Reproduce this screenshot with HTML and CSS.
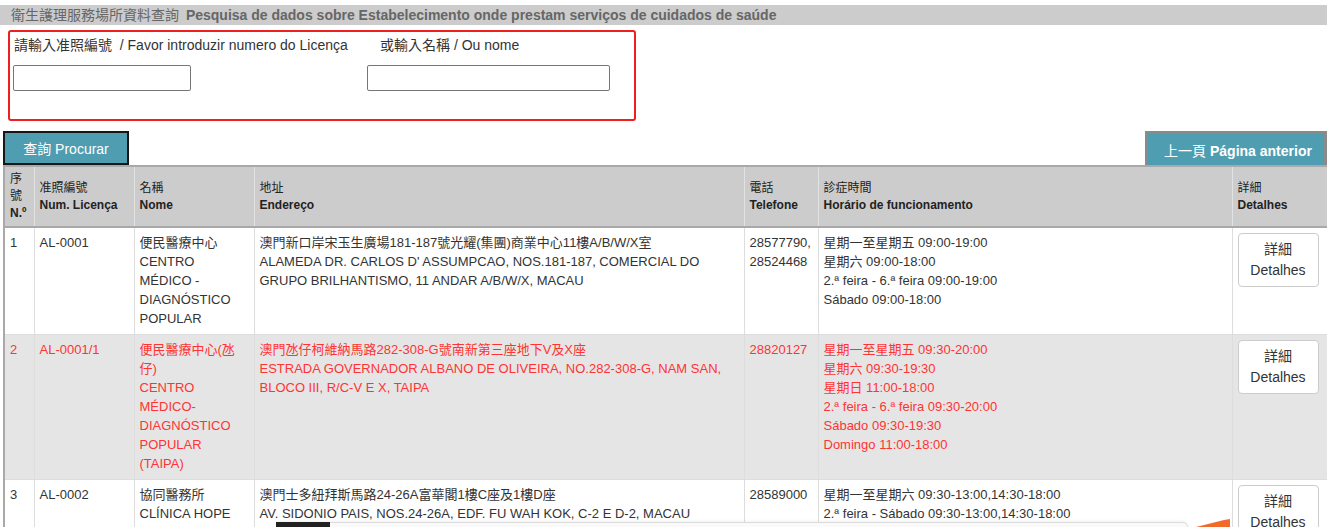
FILE: index.html
```html
<!DOCTYPE html>
<html lang="zh-Hant">
<head>
  <meta charset="UTF-8">
  <title>衛生護理服務場所資料查詢</title>
  <link rel="stylesheet" href="styles.css">
</head>
<body>

  <div class="page-title">
    衛生護理服務場所資料查詢 <b>Pesquisa de dados sobre Estabelecimento onde prestam serviços de cuidados de saúde</b>
  </div>

  <form class="search-box" onsubmit="return false;">
    <div class="field field-licence">
      <label for="licence">請輸入准照編號&nbsp; / Favor introduzir numero do Licença</label>
      <input type="text" id="licence">
    </div>
    <div class="field field-name">
      <label for="name">或輸入名稱 / Ou nome</label>
      <input type="text" id="name">
    </div>
  </form>

  <div class="actions">
    <button class="btn btn-search" type="button">查詢 Procurar</button>
    <button class="btn btn-prev" type="button">上一頁 <b>Página anterior</b></button>
  </div>

  <table class="results">
    <colgroup>
      <col style="width:30px">
      <col style="width:100px">
      <col style="width:120px">
      <col style="width:490px">
      <col style="width:74px">
      <col style="width:414px">
      <col style="width:96px">
    </colgroup>
    <thead>
      <tr>
        <th>序<br>號<br><b>N.º</b></th>
        <th>准照編號<br><b>Num. Licença</b></th>
        <th>名稱<br><b>Nome</b></th>
        <th>地址<br><b>Endereço</b></th>
        <th>電話<br><b>Telefone</b></th>
        <th>診症時間<br><b>Horário de funcionamento</b></th>
        <th>詳細<br><b>Detalhes</b></th>
      </tr>
    </thead>
    <tbody>
      <tr>
        <td>1</td>
        <td>AL-0001</td>
        <td>便民醫療中心<br>CENTRO MÉDICO - DIAGNÓSTICO POPULAR</td>
        <td>澳門新口岸宋玉生廣場181-187號光耀(集團)商業中心11樓A/B/W/X室<br>ALAMEDA DR. CARLOS D' ASSUMPCAO, NOS.181-187, COMERCIAL DO GRUPO BRILHANTISMO, 11 ANDAR A/B/W/X, MACAU</td>
        <td>28577790, 28524468</td>
        <td>星期一至星期五 09:00-19:00<br>星期六 09:00-18:00<br>2.ª feira - 6.ª feira 09:00-19:00<br>Sábado 09:00-18:00</td>
        <td><button class="btn-detail" type="button">詳細<br>Detalhes</button></td>
      </tr>
      <tr class="alt">
        <td>2</td>
        <td>AL-0001/1</td>
        <td>便民醫療中心(氹仔)<br>CENTRO MÉDICO-DIAGNÓSTICO POPULAR (TAIPA)</td>
        <td>澳門氹仔柯維納馬路282-308-G號南新第三座地下V及X座<br>ESTRADA GOVERNADOR ALBANO DE OLIVEIRA, NO.282-308-G, NAM SAN, BLOCO III, R/C-V E X, TAIPA</td>
        <td>28820127</td>
        <td>星期一至星期五 09:30-20:00<br>星期六 09:30-19:30<br>星期日 11:00-18:00<br>2.ª feira - 6.ª feira 09:30-20:00<br>Sábado 09:30-19:30<br>Domingo 11:00-18:00</td>
        <td><button class="btn-detail" type="button">詳細<br>Detalhes</button></td>
      </tr>
      <tr>
        <td>3</td>
        <td>AL-0002</td>
        <td>協同醫務所<br>CLÍNICA HOPE</td>
        <td>澳門士多紐拜斯馬路24-26A富華閣1樓C座及1樓D座<br>AV. SIDONIO PAIS, NOS.24-26A, EDF. FU WAH KOK, C-2 E D-2, MACAU</td>
        <td>28589000</td>
        <td>星期一至星期六 09:30-13:00,14:30-18:00<br>2.ª feira - Sábado 09:30-13:00,14:30-18:00</td>
        <td><button class="btn-detail" type="button">詳細<br>Detalhes</button></td>
      </tr>
    </tbody>
  </table>

  <!-- floating helper panel, only its top edge shows -->
  <div class="float-panel"><span class="float-tab"></span></div>
  <svg class="float-arrow" width="34" height="8" viewBox="0 0 34 8">
    <polygon points="0,8 28,1 34,0 34,8" fill="#f26a2a"/>
  </svg>

</body>
</html>
```

FILE: styles.css
```css
body {
  font-family: "Liberation Sans", Arial, "Noto Sans CJK TC", sans-serif;
  margin: 0;
  padding: 5px 0 0;
  color: #333;
  background: #fff;
  width: 1327px;
  position: relative;
}

.page-title {
  background: #cccccc;
  color: #666;
  font-size: 14px;
  height: 20px;
  line-height: 20px;
  padding-left: 11px;
}

.page-title b {
  margin-left: 3px;
}

.search-box {
  box-sizing: border-box;
  width: 628px;
  height: 91px;
  margin: 5px 0 10px 8px;
  border: 2px solid #ee1f1f;
  border-radius: 3px;
  padding: 5px 0 0 3px;
  display: flex;
}

.field {
  display: flex;
  flex-direction: column;
  align-items: flex-start;
}

.field-licence {
  width: 354px;
}

.field label {
  font-size: 14px;
  line-height: 16px;
  color: #333;
  margin-bottom: 12px;
  padding-left: 1px;
}

.field-name label {
  padding-left: 13px;
}

.field input {
  box-sizing: border-box;
  height: 26px;
  border: 1px solid #767676;
  border-radius: 2px;
  padding: 0 4px;
  font-size: 13px;
}

.field-licence input {
  width: 178px;
}

.field-name input {
  width: 243px;
}

.actions {
  display: flex;
  justify-content: space-between;
  padding-left: 3px;
}

.btn {
  box-sizing: border-box;
  height: 34px;
  background: #4f9db1;
  color: #fff;
  font-family: inherit;
  font-size: 14px;
  cursor: pointer;
}

.btn-search {
  width: 126px;
  border: 2px solid #161616;
  padding-bottom: 2px;
}

.btn-prev {
  width: 182px;
  border: 3px solid #8a8a8a;
  border-bottom: none;
  padding: 0 0 0 4px;
}

.results {
  margin-left: 3px;
  width: 1324px;
  border-collapse: collapse;
  table-layout: fixed;
  font-size: 13px;
}

.results th {
  background: #cccccc;
  color: #222;
  font-size: 12px;
  font-weight: normal;
  line-height: 17px;
  text-align: left;
  vertical-align: middle;
  padding: 4px 5px;
  border-top: 2px solid #a9a9a9;
  border-bottom: 2px solid #a9a9a9;
  border-left: 1px solid #e2e2e2;
  border-right: 1px solid #e2e2e2;
}

.results th:first-child,
.results td:first-child {
  border-left: 2px solid #a9a9a9;
}

.results td {
  vertical-align: top;
  line-height: 19px;
  padding: 5px 5px 6px;
  border: 1px solid #dddddd;
  color: #333;
}

.results tr.alt td {
  background: #e5e5e5;
  color: #ff3333;
}

.btn-detail {
  box-sizing: border-box;
  width: 81px;
  height: 54px;
  margin-top: 0;
  background: #fff;
  border: 1px solid #cccccc;
  border-radius: 4px;
  color: #333;
  font-family: inherit;
  font-size: 14px;
  line-height: 21px;
  cursor: pointer;
}

.float-panel {
  position: absolute;
  top: 522px;
  left: 276px;
  width: 910px;
  height: 40px;
  background: #fafafa;
  border: 1px solid #dcdcdc;
  border-radius: 0 5px 0 0;
  box-shadow: 0 -1px 3px rgba(0, 0, 0, 0.06);
}

.float-tab {
  display: block;
  width: 54px;
  height: 6px;
  background: #222;
  margin: -1px 0 0 -1px;
}

.float-arrow {
  position: absolute;
  top: 519px;
  left: 1196px;
}
```
